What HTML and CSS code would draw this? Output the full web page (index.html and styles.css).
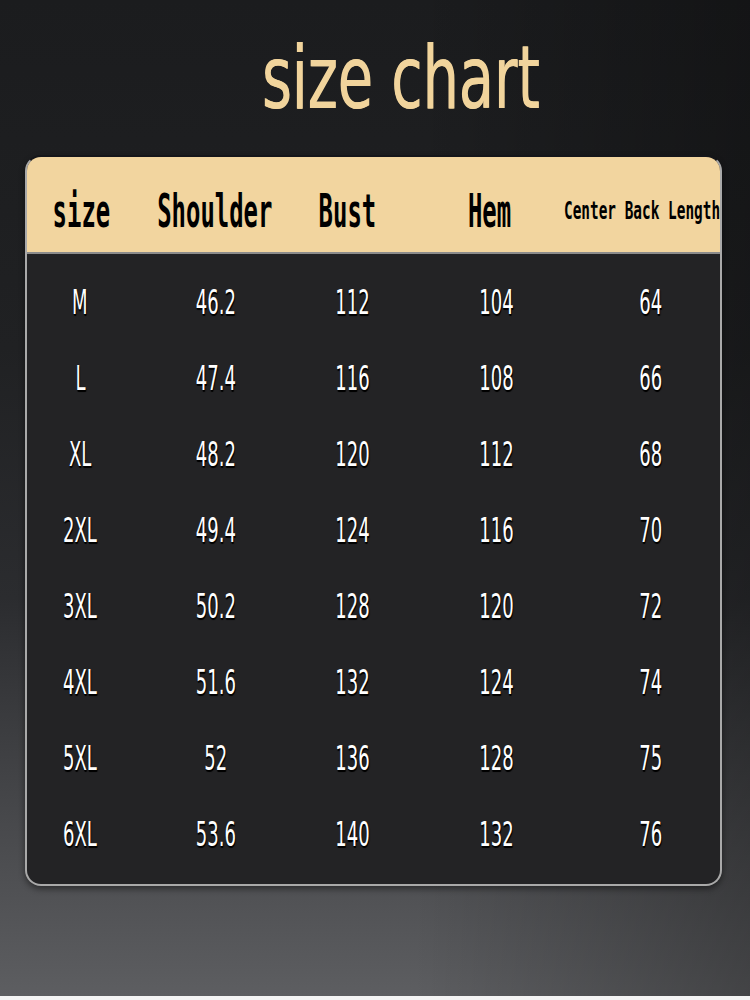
FILE: index.html
```html
<!DOCTYPE html>
<html lang="en">
<head>
<meta charset="utf-8">
<title>size chart</title>
<link rel="stylesheet" href="styles.css">
</head>
<body>
<div class="stage">
  <h1 class="title"><span class="squeeze">size chart</span></h1>
  <div class="card">
    <div class="head">
      <div class="hcell"><span class="hlabel">size</span></div>
      <div class="hcell"><span class="hlabel">Shoulder</span></div>
      <div class="hcell"><span class="hlabel">Bust</span></div>
      <div class="hcell"><span class="hlabel">Hem</span></div>
      <div class="hcell"><span class="hlabel hlabel-small">Center Back Length</span></div>
    </div>
    <div class="body">
      <div class="row"><div class="cell"><span class="val">M</span></div><div class="cell"><span class="val">46.2</span></div><div class="cell"><span class="val">112</span></div><div class="cell"><span class="val">104</span></div><div class="cell"><span class="val">64</span></div></div>
      <div class="row"><div class="cell"><span class="val">L</span></div><div class="cell"><span class="val">47.4</span></div><div class="cell"><span class="val">116</span></div><div class="cell"><span class="val">108</span></div><div class="cell"><span class="val">66</span></div></div>
      <div class="row"><div class="cell"><span class="val">XL</span></div><div class="cell"><span class="val">48.2</span></div><div class="cell"><span class="val">120</span></div><div class="cell"><span class="val">112</span></div><div class="cell"><span class="val">68</span></div></div>
      <div class="row"><div class="cell"><span class="val">2XL</span></div><div class="cell"><span class="val">49.4</span></div><div class="cell"><span class="val">124</span></div><div class="cell"><span class="val">116</span></div><div class="cell"><span class="val">70</span></div></div>
      <div class="row"><div class="cell"><span class="val">3XL</span></div><div class="cell"><span class="val">50.2</span></div><div class="cell"><span class="val">128</span></div><div class="cell"><span class="val">120</span></div><div class="cell"><span class="val">72</span></div></div>
      <div class="row"><div class="cell"><span class="val">4XL</span></div><div class="cell"><span class="val">51.6</span></div><div class="cell"><span class="val">132</span></div><div class="cell"><span class="val">124</span></div><div class="cell"><span class="val">74</span></div></div>
      <div class="row"><div class="cell"><span class="val">5XL</span></div><div class="cell"><span class="val">52</span></div><div class="cell"><span class="val">136</span></div><div class="cell"><span class="val">128</span></div><div class="cell"><span class="val">75</span></div></div>
      <div class="row"><div class="cell"><span class="val">6XL</span></div><div class="cell"><span class="val">53.6</span></div><div class="cell"><span class="val">140</span></div><div class="cell"><span class="val">132</span></div><div class="cell"><span class="val">76</span></div></div>
    </div>
  </div>
</div>
</body>
</html>
```

FILE: styles.css
```css
html, body {
  margin: 0;
  padding: 0;
  background: #f4f4f4;
}

.stage {
  box-sizing: border-box;
  width: 750px;
  height: 996px;
  padding: 35px 0 0 25px;
  background:
    linear-gradient(to right, rgba(0,0,0,0) 55%, rgba(0,0,0,0.28) 100%),
    linear-gradient(to bottom, #1b1c1e 0%, #202123 35%, #2b2c2f 60%, #47484b 82%, #5d5e61 100%);
  font-family: "DejaVu Sans", "Liberation Sans", sans-serif;
}

.title {
  margin: 0;
  height: 86px;
  padding-left: 26px;
  display: flex;
  justify-content: center;
  font-size: 88px;
  line-height: 86px;
  font-weight: normal;
  color: #f1d49c;
}

.squeeze {
  display: inline-block;
  white-space: nowrap;
  transform: scaleX(0.65);
  text-shadow: 1px 0 0 #f1d49c;
}

.card {
  margin-top: 34px;
  width: 697px;
  box-sizing: border-box;
  border: 2px solid #a9a9a9;
  border-top-color: #15161a;
  border-radius: 16px;
  overflow: hidden;
  background: #232325;
  box-shadow: 0 3px 6px rgba(0,0,0,0.45);
}

.head {
  height: 97px;
  display: grid;
  grid-template-columns: 108px 160px 104px 182px 122px;
  align-items: center;
  padding-top: 12px;
  box-sizing: border-box;
  background: #f2d59f;
  border-bottom: 2px solid #8c8c8c;
}

.hcell {
  display: flex;
  justify-content: center;
  white-space: nowrap;
}

.hlabel {
  display: inline-block;
  font-family: "DejaVu Sans Mono", "Liberation Mono", monospace;
  font-weight: bold;
  font-size: 46px;
  line-height: 50px;
  color: #000;
  transform: scaleX(0.52);
}

.hlabel-small {
  font-size: 24px;
  line-height: 30px;
  transform: scaleX(0.6);
}

.body {
  padding: 10px 0 12px;
}

.row {
  height: 76px;
  display: grid;
  grid-template-columns: 106px 166px 106px 182px 128px;
  align-items: center;
}

.cell {
  display: flex;
  justify-content: center;
  white-space: nowrap;
}

.val {
  display: inline-block;
  font-size: 34px;
  line-height: 40px;
  color: #ffffff;
  text-shadow: 1px 1px 1px #000, 1px 2px 1px #000;
  transform: scaleX(0.53);
}
```
